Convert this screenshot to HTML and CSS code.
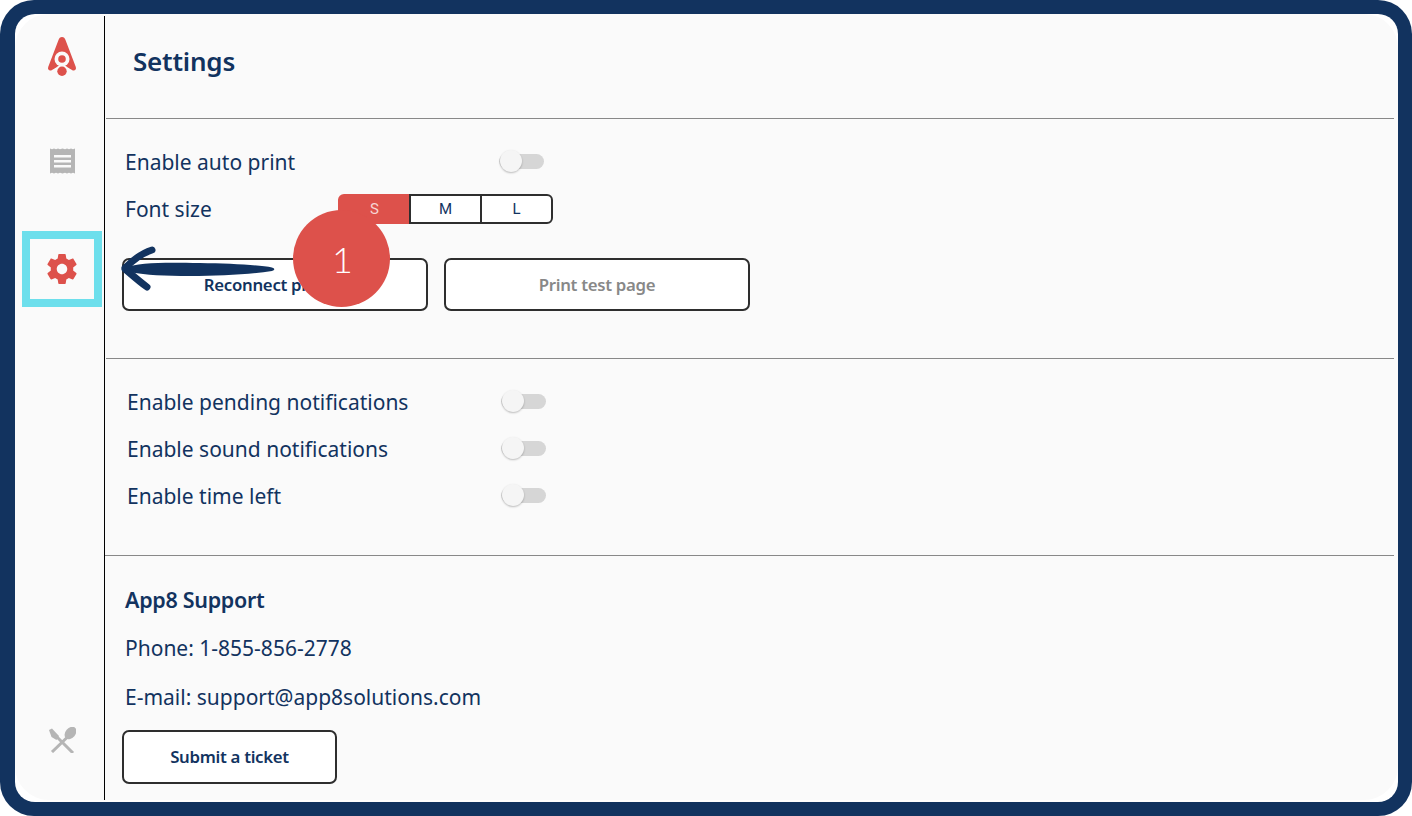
FILE: index.html
```html
<!DOCTYPE html>
<html lang="en">
<head>
  <meta charset="UTF-8">
  <title>Settings</title>
  <link rel="stylesheet" href="styles.css">
</head>
<body>
  <div class="frame">
    <div class="app">
      <div class="panel">
        <nav class="sidebar">
          <svg class="nav-logo" width="30" height="40" viewBox="0 0 30 40">
            <path fill="#dd514b" d="M15 0C16.800 0 17.800 1.200 18.500 3L28.800 30C29.800 33 27 34.500 25 33L15 27L5 33C3 34.500 0.200 33 1.200 30L11.500 3C12.200 1.200 13.200 0 15 0Z"/>
            <circle cx="15" cy="34.300" r="6.500" fill="#fafafa"/>
            <circle cx="15" cy="22" r="7.500" fill="#fafafa"/>
            <circle cx="15" cy="22" r="3.800" fill="#dd514b"/>
            <circle cx="15" cy="34.300" r="4.700" fill="#dd514b"/>
          </svg>
          <svg class="nav-orders" width="25" height="26" viewBox="0 0 25 26">
            <path fill="#b5b5b5" fill-rule="evenodd" d="M0 0.500L2 1.300L4 0.500L6 1.300L8 0.500L10 1.300L12.500 0.500L15 1.300L17 0.500L19 1.300L21 0.500L23 1.300L25 0.500V25.500L23 24.700L21 25.500L19 24.700L17 25.500L15 24.700L12.500 25.500L10 24.700L8 25.500L6 24.700L4 25.500L2 24.700L0 25.500ZM4 7V9.500H21V7ZM4 12V14.500H21V12ZM4 17V19.500H21V17Z"/>
          </svg>
          <svg class="nav-gear" width="36" height="36" viewBox="0 0 24 24">
            <path fill="#dd514b" d="M19.430 12.980c.04-.32.070-.64.070-.98s-.03-.66-.07-.98l2.110-1.650c.19-.15.240-.42.120-.64l-2-3.460c-.12-.22-.39-.3-.61-.22l-2.490 1c-.52-.4-1.080-.73-1.690-.98l-.38-2.650C14.460 2.180 14.250 2 14 2h-4c-.25 0-.46.18-.49.420l-.38 2.650c-.61.25-1.170.59-1.690.98l-2.490-1c-.23-.09-.49 0-.61.22l-2 3.460c-.13.22-.07.49.12.640l2.110 1.650c-.04.32-.07.65-.07.98s.03.66.07.98l-2.110 1.650c-.19.15-.24.42-.12.64l2 3.460c.12.22.39.3.61.22l2.490-1c.52.4 1.080.73 1.690.98l.38 2.650c.03.24.24.42.49.42h4c.25 0 .46-.18.49-.42l.38-2.650c.61-.25 1.170-.59 1.690-.98l2.490 1c.23.09.49 0 .61-.22l2-3.460c.12-.22.07-.49-.12-.64l-2.110-1.650zM12 15.500c-1.930 0-3.500-1.570-3.500-3.500s1.570-3.500 3.500-3.500 3.500 1.570 3.500 3.500-1.570 3.500-3.500 3.500z"/>
          </svg>
          <svg class="nav-menu" width="28" height="26" viewBox="0 0 28 26">
            <path stroke="#b5b5b5" stroke-width="3" fill="none" d="M4 25L19 10.500M8 9L25 26"/>
            <path fill="#b5b5b5" d="M1 3L4 1.500L11 9L8.500 13L3.500 10Z"/>
            <ellipse cx="22.500" cy="6" rx="5" ry="7" transform="rotate(40 22.500 6)" fill="#b5b5b5"/>
          </svg>
        </nav>

        <main class="content">
          <header class="page-head">
            <h1>Settings</h1>
          </header>

          <section class="section printer">
            <div class="row">
              <span class="row-label">Enable auto print</span>
              <span class="toggle"></span>
            </div>
            <div class="row">
              <span class="row-label label-font">Font size</span>
              <div class="sizes">
                <span class="size active">S</span>
                <span class="size">M</span>
                <span class="size">L</span>
              </div>
            </div>
            <div class="actions">
              <button class="btn wide">Reconnect printer</button>
              <button class="btn wide muted">Print test page</button>
            </div>
          </section>

          <section class="section notify">
            <div class="row">
              <span class="row-label">Enable pending notifications</span>
              <span class="toggle"></span>
            </div>
            <div class="row">
              <span class="row-label">Enable sound notifications</span>
              <span class="toggle"></span>
            </div>
            <div class="row">
              <span class="row-label">Enable time left</span>
              <span class="toggle"></span>
            </div>
          </section>

          <section class="support">
            <h2>App8 Support</h2>
            <p>Phone: 1-855-856-2778</p>
            <p>E-mail: support@app8solutions.com</p>
            <button class="btn ticket">Submit a ticket</button>
          </section>
        </main>
      </div>
    </div>

    <!-- Tutorial annotations -->
    <div class="highlight"></div>
    <svg class="arrow" width="156" height="48" viewBox="0 0 156 48">
      <path fill="#12335f" d="M3 23C20 17 45 17.500 80 18C110 18.500 140 20 152 22.500C155 23.500 155 25 152 26C130 29.500 100 31 70 31C45 31 25 30 12 27.500C8 26.500 3 25 3 23Z"/>
      <path fill="none" stroke="#12335f" stroke-width="7" stroke-linecap="round" d="M5 23C12 16 22 8 32 5M5 24C12 30 20 37 27 42"/>
    </svg>
    <div class="badge">1</div>
  </div>
</body>
</html>
```

FILE: styles.css
```css
* {
  box-sizing: border-box;
}

body {
  margin: 0;
  font-family: 'Noto Sans', sans-serif;
  color: #12335f;
  background: #fff;
}

.frame {
  position: relative;
  width: 1412px;
  height: 816px;
  background: #12335f;
  border-radius: 34px;
  padding: 14px 14px 14px 15px;
}

.app {
  height: 788px;
  background: #fff;
  border-radius: 20px;
}

.panel {
  display: flex;
  height: 786px;
  background: #fafafa;
  border-radius: 34px;
  padding-top: 2px;
}

/* Sidebar */
.sidebar {
  width: 90px;
  height: 784px;
  flex-shrink: 0;
  border-right: 1px solid #000;
  padding-left: 5px;
  display: flex;
  flex-direction: column;
  align-items: center;
}

.nav-logo {
  margin-top: 21px;
}

.nav-orders {
  margin-top: 71px;
}

.nav-gear {
  margin-top: 77px;
}

.nav-menu {
  margin-top: auto;
  margin-bottom: 47px;
}

/* Main column */
.content {
  flex: 1;
  padding: 0 4px 0 1px;
}

.page-head {
  height: 103px;
  padding: 29px 0 0 27px;
  border-bottom: 1px solid #888;
}

h1 {
  margin: 0;
  font-size: 26px;
  line-height: 32px;
  font-weight: 600;
  letter-spacing: -0.2px;
}

.section {
  border-bottom: 1px solid #888;
}

.printer {
  height: 240px;
  padding: 19px 0 0 19px;
}

.notify {
  height: 197px;
  margin-left: -1px;
  padding: 19px 0 0 22px;
}

.row {
  display: flex;
  align-items: center;
  height: 47px;
}

.row-label {
  width: 374px;
  font-size: 21px;
}

.label-font {
  width: 213px;
}

.toggle {
  position: relative;
  width: 45px;
  height: 15px;
  background: #d6d6d6;
  border-radius: 8px;
}

.toggle::before {
  content: "";
  position: absolute;
  left: 1px;
  top: -4px;
  width: 22px;
  height: 22px;
  border-radius: 50%;
  background: #f5f5f5;
  box-shadow: 0 1px 2px rgba(0, 0, 0, 0.25);
}

.sizes {
  display: flex;
  width: 215px;
  height: 30px;
}

.size {
  flex: 1;
  display: flex;
  align-items: center;
  justify-content: center;
  padding-top: 1px;
  background: #fff;
  font-family: 'Roboto', sans-serif;
  font-size: 15px;
  border: 2px solid #2e2e2e;
  margin-left: -2px;
}

.size:last-child {
  border-radius: 0 6px 6px 0;
}

.size.active {
  background: #dd514b;
  border-color: #dd514b;
  border-radius: 6px 0 0 0;
  color: #f6d5d3;
  margin-left: 0;
}

.actions {
  display: flex;
  gap: 16px;
  margin: 26px 0 0 -3px;
}

.btn {
  height: 54px;
  padding-bottom: 2px;
  background: #fff;
  border: 2px solid #2e2e2e;
  border-radius: 7px;
  font-family: 'Noto Sans', sans-serif;
  font-size: 16.800px;
  font-weight: 600;
  letter-spacing: -0.3px;
  color: #12335f;
}

.btn.wide {
  width: 306px;
  height: 53px;
}

.btn.muted {
  color: #888;
}

.support {
  padding: 24px 0 0 19px;
}

.support h2 {
  margin: 0 0 4px;
  font-size: 21.500px;
  line-height: 40px;
  font-weight: 600;
  letter-spacing: -0.3px;
}

.support p {
  margin: 0;
  font-size: 21px;
  line-height: 49px;
}

.btn.ticket {
  display: block;
  width: 215px;
  margin: 8px 0 0 -3px;
}

/* Annotations */
.highlight {
  position: absolute;
  left: 22px;
  top: 231px;
  width: 80px;
  height: 76px;
  border: 8px solid #6ddfec;
}

.arrow {
  position: absolute;
  left: 120px;
  top: 245px;
}

.badge {
  position: absolute;
  left: 293px;
  top: 210px;
  width: 97px;
  height: 97px;
  padding-left: 2px;
  border-radius: 50%;
  background: #dd514b;
  color: #fff;
  font-family: 'Lato', sans-serif;
  font-size: 36px;
  font-weight: 300;
  display: flex;
  align-items: center;
  justify-content: center;
}
```
